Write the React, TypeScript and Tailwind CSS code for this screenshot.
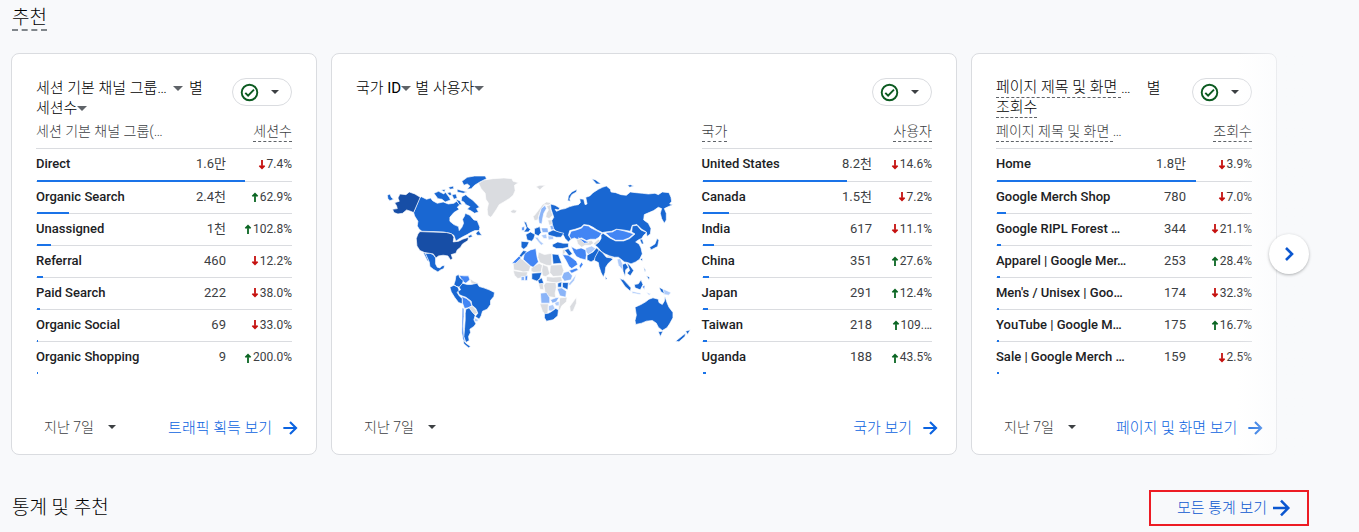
import type { ReactNode } from "react";
import { clsx } from "clsx";

type Row = {
  name: string;
  value: string;
  change: string;
  up?: boolean;
  bar: number;
};

const channels: Row[] = [
  { name: "Direct", value: "1.6만", change: "7.4%", bar: 81.3 },
  { name: "Organic Search", value: "2.4천", change: "62.9%", up: true, bar: 12.5 },
  { name: "Unassigned", value: "1천", change: "102.8%", up: true, bar: 5.5 },
  { name: "Referral", value: "460", change: "12.2%", bar: 2.4 },
  { name: "Paid Search", value: "222", change: "38.0%", bar: 1.2 },
  { name: "Organic Social", value: "69", change: "33.0%", bar: 0.4 },
  { name: "Organic Shopping", value: "9", change: "200.0%", up: true, bar: 0.4 },
];

const countries: Row[] = [
  { name: "United States", value: "8.2천", change: "14.6%", bar: 62.6 },
  { name: "Canada", value: "1.5천", change: "7.2%", bar: 11.3 },
  { name: "India", value: "617", change: "11.1%", bar: 4.8 },
  { name: "China", value: "351", change: "27.6%", up: true, bar: 2.7 },
  { name: "Japan", value: "291", change: "12.4%", up: true, bar: 2.2 },
  { name: "Taiwan", value: "218", change: "109.…", up: true, bar: 1.8 },
  { name: "Uganda", value: "188", change: "43.5%", up: true, bar: 1.4 },
];

const pages: Row[] = [
  { name: "Home", value: "1.8만", change: "3.9%", bar: 77.8 },
  { name: "Google Merch Shop", value: "780", change: "7.0%", bar: 3.5 },
  { name: "Google RIPL Forest …", value: "344", change: "21.1%", bar: 1.6 },
  { name: "Apparel | Google Mer…", value: "253", change: "28.4%", up: true, bar: 1.2 },
  { name: "Men's / Unisex | Goo…", value: "174", change: "32.3%", bar: 0.8 },
  { name: "YouTube | Google M…", value: "175", change: "16.7%", up: true, bar: 0.8 },
  { name: "Sale | Google Merch …", value: "159", change: "2.5%", bar: 0.8 },
];

// Map shapes, grouped by shade
const regions: { fill: string; shapes: string[] }[] = [
  {
    fill: "#dadce0",
    shapes: [
      "M296 40L312 30 340 26 372 24 396 26 400 34 416 38 404 46 406 62 400 76 388 86 372 96 358 104 350 118 338 136 332 142 324 136 322 118 326 100 318 88 316 70 304 56z",
      "M392 124L400 119 412 122 406 130 396 129z",
      "M468 50L480 46 498 46 488 52 480 60 474 54z",
      "M460 140L466 134 478 118 488 104 500 96 514 98 508 106 494 104 484 120 478 134 474 150 464 152z",
      "M500 108L512 104 514 122 519 136 508 146 498 142 500 130 506 120z",
      "M504 150L518 150 518 164 508 166z",
      "M270 326L282 334 296 340 290 348 274 340z",
      "M266 412L278 408 288 420 294 430 282 434 272 420z",
      "M476 246L494 254 516 250 516 288 500 286 480 278 474 262z",
      "M400 282L420 264 430 270 452 290 448 304 430 308 424 304 402 300z",
      "M454 294L478 280 488 286 484 306 462 308 454 304z",
      "M489 284L504 290 510 312 498 320 488 318 486 300z",
      "M512 286L546 284 552 302 546 318 520 320 510 308z",
      "M400 302L426 306 444 306 440 320 424 324 414 326 404 316z",
      "M500 320L520 322 544 320 548 334 526 340 500 334z",
      "M498 338L528 338 530 352 526 370 528 384 506 380 496 368 492 346z",
      "M476 342L490 340 492 360 480 358z",
      "M540 384L562 382 560 396 546 408 540 422 536 416 538 398z",
      "M480 402L506 402 504 430 496 434 488 424z",
      "M570 410L580 396 590 382 590 400 580 424 572 426z",
      "M590 208L606 206 620 214 636 212 642 220 632 226 616 226 606 232 594 222z",
      "M640 222L656 208 662 214 650 228z",
      "M680 256L702 262 700 267 684 262z",
      "M548 240L556 238 556 250 548 254z",
    ],
  },
  {
    fill: "#aecbfa",
    shapes: [
      "M618 234L636 228 648 236 638 246 626 254 618 246z",
      "M712 268L722 266 728 280 730 302 716 286z",
      "M284 444L296 450 292 456 284 454z",
      "M464 202L474 202 480 212 492 222 484 226 474 214z",
      "M504 198L520 198 522 208 506 210z",
      "M484 196L500 192 502 206 492 206z",
      "M566 342L578 328 590 312 584 332 570 348z",
      "M506 408L520 404 526 416 514 424 506 422z",
      "M524 398L538 394 538 408 528 408z",
      "M852 358L874 368 868 376 852 374z",
      "M756 364L784 370 782 374 758 370z",
      "M800 368L814 372 808 376z",
    ],
  },
  {
    fill: "#8ab4f8",
    shapes: [
      "M484 116L496 106 500 116 492 130 489 144 486 162 478 160 476 144 480 130z",
      "M484 174L504 174 506 188 488 188z",
      "M510 168L524 164 530 178 514 180z",
      "M552 308L566 304 578 318 574 330 554 334 546 322z",
      "M532 356L546 354 560 364 558 382 540 378z",
      "M482 370L500 368 510 384 510 400 484 400z",
      "M512 390L528 384 538 382 530 396 518 400z",
      "M424 320L434 320 434 332 424 332z",
    ],
  },
  {
    fill: "#4285f4",
    shapes: [
      "M574 184L590 180 606 174 612 166 626 168 634 174 650 182 666 190 658 202 648 208 632 208 620 212 606 204 592 208 584 204 574 208 568 198z",
      "M676 188L698 186 712 178 730 182 750 188 762 192 748 204 730 211 708 211 692 202z",
      "M596 204L612 210 628 218 614 220z",
      "M238 316L252 318 266 318 270 330 258 340 250 336 244 328z",
      "M246 380L260 386 272 396 276 408 264 414 254 416 248 400z",
      "M247 414L252 416 252 440 250 470 253 500 256 516 250 512 246 490z",
      "M434 250L452 240 468 236 472 262 476 276 460 292 452 288 430 268z",
      "M396 280L418 258 424 264 408 280z",
      "M574 230L590 238 604 234 618 240 620 256 618 270 602 266 590 260 582 248z",
      "M548 254L566 256 580 266 590 274 594 284 576 296 568 290 560 274z",
      "M568 302L590 294 596 300 576 310z",
      "M598 288L606 276 610 284 602 296z",
      "M426 172L434 170 433 182 426 182z",
      "M436 318L444 318 442 332 436 332z",
      "M788 350L796 346 794 360z",
    ],
  },
  {
    fill: "#1967d2",
    shapes: [
      "M22 76L30 72 34 82 41 88 30 92 24 86z",
      "M119 84L124 80 140 88 152 84 158 92 172 100 190 96 205 102 222 100 230 94 240 104 232 112 238 118 222 128 210 142 210 154 222 164 236 170 238 182 246 172 251 160 248 148 254 138 256 130 270 136 282 150 292 152 300 172 298 182 285 182 272 188 262 194 250 200 236 208 228 214 222 196 210 190 190 186 126 184 118 178 112 168 114 154 104 138 101 128z",
      "M162 70L176 64 192 72 196 66 208 82 212 90 196 96 186 88 174 86z",
      "M184 60L196 58 194 66z",
      "M202 68L212 66 216 76 208 76z",
      "M216 74L228 72 232 84 222 88z",
      "M246 80L258 74 266 82 278 90 292 104 299 112 290 116 296 126 284 130 272 122 262 118 270 110 258 104 252 96 244 92z",
      "M228 88L240 92 246 104 238 104z",
      "M246 34L262 22 284 18 316 18 320 26 300 36 284 46 274 56 262 58 270 48 262 42 252 46z",
      "M206 52L220 48 222 56 210 58z",
      "M232 58L248 62 262 66 250 70 232 66z",
      "M288 190L296 182 306 196 292 196z",
      "M264 198L274 194 278 200 268 204z",
      "M130 248L137 250 148 276 142 272z",
      "M136 250L150 250 160 254 167 264 167 282 172 292 180 294 186 288 194 286 192 296 182 300 174 306 160 298 150 290 148 276z",
      "M228 318L236 314 240 324 250 332 248 342 240 352 230 350 222 344 226 332z",
      "M210 352L222 346 234 352 238 362 232 368 238 378 247 386 247 402 236 398 224 382 214 366z",
      "M238 352L248 340 262 344 274 344 292 340 298 350 312 354 328 360 344 368 342 380 332 392 332 404 322 418 308 424 304 438 298 448 286 440 294 430 288 416 276 406 274 394 258 382 246 378 238 374 234 364 242 360z",
      "M258 418L268 414 278 428 286 436 282 450 288 462 282 470 270 478 272 488 266 500 268 512 258 518 252 500 254 476 256 450 256 430z",
      "M250 510L258 520 272 530 266 534 252 522z",
      "M512 102L526 106 540 114 536 120 526 118 530 124 544 118 556 116 570 110 584 106 596 104 602 98 600 86 612 88 616 104 622 102 618 82 630 78 640 68 656 58 668 52 680 48 692 58 694 66 708 68 724 74 740 76 752 66 768 68 788 70 806 72 826 70 836 74 848 66 868 68 874 82 876 94 870 102 880 104 862 112 854 116 860 130 860 150 854 160 846 146 842 130 846 116 836 112 822 122 808 128 794 134 792 150 806 160 814 176 812 192 802 200 800 186 786 178 772 164 758 166 752 184 730 180 710 178 696 184 678 186 668 188 652 180 640 172 628 166 612 164 604 172 586 178 570 182 566 196 574 208 566 216 556 206 550 194 540 188 528 184 522 176 518 164 516 152 522 142 518 130 514 118z",
      "M564 92L566 78 576 66 592 58 590 66 576 74 570 86 572 94z",
      "M636 26L648 30 664 42 650 42z",
      "M744 46L752 44 762 48 750 52z",
      "M670 190L690 204 708 213 732 213 750 206 766 192 756 186 758 168 772 166 784 180 801 188 792 196 786 206 776 210 768 216 778 222 784 234 788 252 780 268 768 276 754 282 744 278 734 276 724 268 716 262 704 262 690 258 676 252 664 244 654 232 646 226 658 216 664 206 664 196z",
      "M780 208L788 208 792 222 786 222z",
      "M826 222L832 206 838 210 834 230 814 240 810 232z",
      "M782 268L788 264 788 274z",
      "M622 256L640 246 650 234 660 242 650 258 644 270 634 276 622 270z",
      "M646 262L658 240 668 248 680 262 694 264 700 268 686 280 678 292 676 308 671 322 664 308 658 290 656 278 644 272z",
      "M676 320L682 326 678 330z",
      "M728 284L738 280 746 292 738 300 736 320 730 304z",
      "M742 278L752 288 762 302 752 318 742 310 750 302z",
      "M720 326L732 330 754 354 752 364 736 350z",
      "M764 344L776 342 784 330 790 344 782 360 766 354z",
      "M792 292L798 300 796 306z",
      "M800 318L810 322 808 330z",
      "M838 352L850 358 854 372 844 366z",
      "M766 412L784 404 798 396 808 388 820 384 836 388 838 398 848 404 854 394 856 380 862 398 868 412 880 428 880 444 870 462 862 474 848 482 836 472 830 460 818 452 800 454 786 460 768 464 766 452 770 436z",
      "M836 486L850 484 842 500z",
      "M918 484L932 480 924 494z",
      "M888 514L908 498 918 490 916 500 898 516z",
      "M432 154L440 158 444 172 452 178 446 186 432 186 440 174z",
      "M438 194L452 186 466 194 462 206 456 214 442 210z",
      "M464 176L480 170 484 188 476 198 464 192z",
      "M424 214L448 216 442 230 432 238 424 232z",
      "M504 188L520 180 536 186 552 190 544 202 530 202 516 198 506 196z",
      "M518 224L534 216 550 220 566 220 566 232 548 236 530 236 518 230z",
      "M554 240L566 236 578 252 568 258z",
      "M517 252L536 254 546 280 520 282z",
      "M418 258L430 242 442 244 434 252 424 262z",
      "M456 310L486 308 480 326 472 334 456 328z",
      "M474 332L486 324 492 340 478 342z",
      "M548 338L566 338 564 360 548 352z",
      "M534 340L546 336 545 352 534 352z",
      "M494 432L506 430 514 426 528 416 536 420 534 438 520 450 500 454 494 444z",
    ],
  },
  {
    fill: "#174ea6",
    shapes: [
      "M60 72L78 74 88 66 105 72 121 82 101 128 92 124 80 120 68 130 54 132 42 128 38 118 52 116 50 108 44 98 58 94 54 84z",
      "M120 185L200 188 216 192 222 202 220 216 236 214 248 208 266 202 264 212 248 222 242 232 232 240 228 250 214 254 218 266 212 270 204 258 190 256 176 258 168 264 160 252 148 250 134 248 120 242 111 228 109 206 114 192z",
    ],
  },
];

function WorldMap() {
  return (
    <svg
      viewBox="-72 0 1038 555"
      className="mt-[52px] block w-full"
      role="img"
      aria-label="국가별 사용자"
    >
      {regions.map((r) => (
        <g
          key={r.fill}
          fill={r.fill}
          stroke="#fff"
          strokeWidth="2"
          strokeLinejoin="round"
        >
          {r.shapes.map((d) => (
            <path key={d} d={d} />
          ))}
        </g>
      ))}
    </svg>
  );
}

function ArrowIcon({ className }: { className: string }) {
  return (
    <svg
      viewBox="0 0 24 24"
      className={clsx("shrink-0 fill-none stroke-current", className)}
      strokeWidth="2.5"
      aria-hidden
    >
      <path d="M4 12h15M12 4.7l7.3 7.3-7.3 7.3" />
    </svg>
  );
}

function CheckIcon() {
  return (
    <svg
      viewBox="0 0 21 21"
      className="size-[21px] fill-none stroke-[#0b5a20]"
      strokeWidth="1.9"
      aria-hidden
    >
      <circle cx="10.5" cy="10.5" r="7.8" />
      <path d="M6.3 10.9l2.8 2.8 5.9-6" />
    </svg>
  );
}

function Caret({ className }: { className: string }) {
  return (
    <svg
      viewBox="0 0 10 5"
      className={clsx("inline-block shrink-0 fill-current", className)}
      aria-hidden
    >
      <path d="M0 0h10L5 5z" />
    </svg>
  );
}

function ChangeArrow({ up }: { up?: boolean }) {
  return (
    <svg
      viewBox="0 0 8 10"
      className={clsx(
        "mr-px inline-block h-2.5 w-2 fill-none",
        up ? "stroke-[#0b6623]" : "rotate-180 stroke-[#c5110f]"
      )}
      strokeWidth="1.8"
      aria-label={up ? "증가" : "감소"}
    >
      <path d="M4 10V1.6M1.4 4.4L4 1.8 6.6 4.4" />
    </svg>
  );
}

function Dashed({ children }: { children: ReactNode }) {
  return (
    <span className="inline-block border-b border-dashed border-[#5f6368] align-top leading-[19px]">
      {children}
    </span>
  );
}

function DataTable({
  nameHead,
  valueHead,
  rows,
  changeCol,
}: {
  nameHead: ReactNode;
  valueHead: string;
  rows: Row[];
  changeCol: string;
}) {
  return (
    <table className="w-full table-fixed border-separate border-spacing-0">
      <colgroup>
        <col />
        <col className="w-[58px]" />
        <col className={changeCol} />
      </colgroup>
      <thead>
        <tr className="text-sm/[19px] text-[#3c4043]">
          <th className="h-[31px] border-b border-[#dadce0] pt-1 text-left align-top font-light whitespace-nowrap">
            {nameHead}
          </th>
          <th
            colSpan={2}
            className="border-b border-[#dadce0] pt-1 text-right align-top font-light"
          >
            <Dashed>{valueHead}</Dashed>
          </th>
        </tr>
      </thead>
      <tbody className="text-[13px] text-[#202124]">
        {rows.map((row, i) => {
          const line = i < rows.length - 1 && "border-b border-[#dadce0]";
          return (
            <tr key={row.name} className="relative h-8 first:h-[33px]">
              <td className={clsx("pb-0.5 font-medium whitespace-nowrap", line)}>
                {row.name}
                <span
                  className="absolute bottom-0 left-px h-0.5 bg-[#1a73e8]"
                  style={{ width: `${row.bar}%` }}
                />
              </td>
              <td className={clsx("pb-0.5 text-right text-[#3c4043]", line)}>
                {row.value}
              </td>
              <td
                className={clsx(
                  "pb-0.5 text-right text-xs whitespace-nowrap text-[#3c4043]",
                  line
                )}
              >
                <ChangeArrow up={row.up} />
                {row.change}
              </td>
            </tr>
          );
        })}
      </tbody>
    </table>
  );
}

function Card({
  title,
  link,
  className,
  children,
}: {
  title: ReactNode;
  link: string;
  className?: string;
  children: ReactNode;
}) {
  return (
    <article
      className={clsx("min-w-0 rounded-lg border border-[#dadce0] bg-white", className)}
    >
      <div className="px-6 pt-6">
        <div className="flex min-h-10 justify-between">
          <h3 className="text-[15px]/5 font-light text-black">{title}</h3>
          <button
            type="button"
            aria-label="데이터 품질"
            className="flex h-7 w-15 shrink-0 items-center justify-between rounded-full border border-[#dadce0] pr-3 pl-1.5 text-[#3c4043]"
          >
            <CheckIcon />
            <Caret className="h-1 w-2" />
          </button>
        </div>
        {children}
      </div>
      <div className="mt-[35px] mb-[9px] flex h-9 items-center justify-between pr-2 pl-6">
        <button
          type="button"
          className="flex w-28 shrink-0 items-center gap-[14px] pl-2 text-sm font-light text-[#3c4043]"
        >
          지난 7일
          <Caret className="h-1 w-2" />
        </button>
        <a
          href="#report"
          className="flex shrink-0 items-center gap-2 px-2 pt-0.5 text-[15px] font-light whitespace-nowrap text-[#0b63e0]"
        >
          {link}
          <ArrowIcon className="size-5" />
        </a>
      </div>
    </article>
  );
}

function TitleMenu({ children }: { children: ReactNode }) {
  return (
    <button type="button" className="flex items-center whitespace-nowrap">
      {children}
      <Caret className="h-[5px] w-2.5 text-[#5f6368]" />
    </button>
  );
}

export default function App() {
  return (
    <main className="min-h-screen bg-[#f8f9fb] pr-[50px] pl-[11px] font-[Roboto,'Noto_Sans_CJK_KR',sans-serif] text-black">
      <section>
        <div className="flex pt-1.5 pb-[22px] pl-px">
          <h2 className="border-b-2 border-dashed border-[#80868b] text-[19px]/[23px] font-light">
            추천
          </h2>
        </div>

        <div className="relative pr-8">
          <div className="grid grid-cols-4 gap-3.5">
            <Card
              link="트래픽 획득 보기"
              title={
                <>
                  <span className="flex gap-1.5">
                    <TitleMenu>
                      <span className="pr-1.5">세션 기본 채널 그룹…</span>
                    </TitleMenu>
                    별
                  </span>
                  <TitleMenu>세션수</TitleMenu>
                </>
              }
            >
              <DataTable
                nameHead="세션 기본 채널 그룹(…"
                valueHead="세션수"
                rows={channels}
                changeCol="w-[66px]"
              />
            </Card>

            <Card
              link="국가 보기"
              className="col-span-2"
              title={
                <span className="flex gap-1">
                  <TitleMenu>
                    <span>
                      국가 <span className="font-normal">ID</span>
                    </span>
                  </TitleMenu>
                  별
                  <TitleMenu>사용자</TitleMenu>
                </span>
              }
            >
              <div className="grid grid-cols-[3fr_2fr]">
                <WorldMap />
                <DataTable
                  nameHead={<Dashed>국가</Dashed>}
                  valueHead="사용자"
                  rows={countries}
                  changeCol="w-[60px]"
                />
              </div>
            </Card>

            <Card
              link="페이지 및 화면 보기"
              title={
                <>
                  <span className="flex h-5 whitespace-nowrap">
                    <Dashed>페이지 제목 및 화면&nbsp;</Dashed>
                    <span className="pr-4">…</span>
                    별
                  </span>
                  <span className="flex h-5">
                    <Dashed>조회수</Dashed>
                  </span>
                </>
              }
            >
              <DataTable
                nameHead={
                  <>
                    <Dashed>페이지 제목 및 화면&nbsp;</Dashed>…
                  </>
                }
                valueHead="조회수"
                rows={pages}
                changeCol="w-[66px]"
              />
            </Card>
          </div>

          <div className="pointer-events-none absolute inset-y-0 right-0 w-18 bg-linear-to-r from-[#f8f9fb]/0 to-[#f8f9fb]" />
          <button
            type="button"
            aria-label="다음"
            className="absolute top-1/2 right-0 flex size-10 -translate-y-1/2 items-center justify-center rounded-full bg-white text-[#0b57d0] shadow-[0_1px_3px_rgba(60,64,67,0.4)]"
          >
            <svg
              viewBox="0 0 24 24"
              className="size-6 fill-none stroke-current"
              strokeWidth="2.6"
              aria-hidden
            >
              <path d="M9 6l6 6-6 6" />
            </svg>
          </button>
        </div>
      </section>

      <section className="flex items-center justify-between pt-[35px] pl-px">
        <h2 className="text-[19px]/9 font-light">통계 및 추천</h2>
        <a
          href="#insights"
          className="flex h-9 items-center gap-0.5 border-2 border-[#ed1c24] pr-3.5 pl-[26px] text-[15px] font-light text-[#0b57d0]"
        >
          모든 통계 보기
          <ArrowIcon className="size-6" />
        </a>
      </section>
    </main>
  );
}
